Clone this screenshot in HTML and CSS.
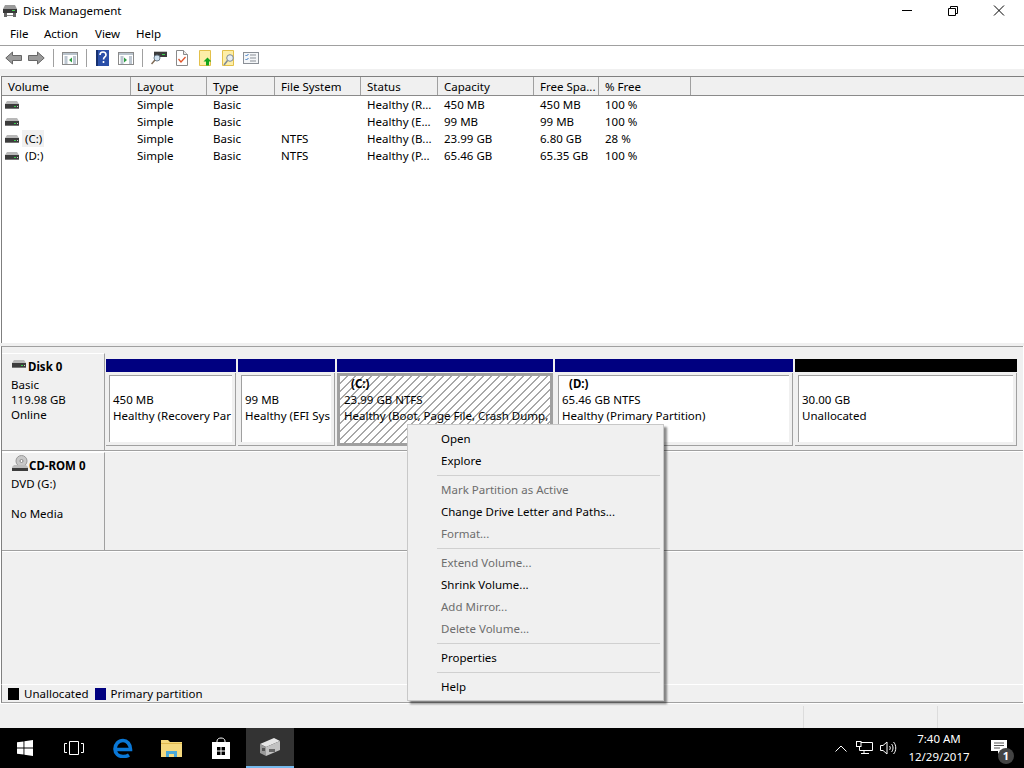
FILE: index.html
```html
<!DOCTYPE html>
<html>
<head>
  <meta charset="utf-8">
  <title>Disk Management</title>
  <link rel="stylesheet" href="styles.css">
</head>
<body>
  <svg class="defs" width="0" height="0">
    <symbol id="drive" viewBox="0 0 14 8">
      <path d="M2 0h10l2 3H0z" fill="#b8b8b8"/>
      <rect x="0" y="3" width="14" height="5" fill="#3c3c3c"/>
      <rect x="0" y="7" width="14" height="1" fill="#777"/>
      <rect x="9" y="5" width="2" height="1" fill="#35d04a"/>
      <rect x="12" y="5" width="1" height="1" fill="#cfcfcf"/>
    </symbol>
    <symbol id="panel" viewBox="0 0 16 13">
      <rect x=".5" y=".5" width="15" height="12" fill="#fff" stroke="#8a8a8a"/>
      <rect x="1" y="1" width="14" height="2" fill="#b9c3cc"/>
      <path d="M2.5 5h3M2.5 7h3M2.5 9h3M2.5 11h3M11 5h3M11 7h3M11 9h3M11 11h3" stroke="#7a8ea3"/>
    </symbol>
  </svg>

  <div class="window">
    <!-- Title bar -->
    <div class="titlebar">
      <svg class="app-icon" viewBox="0 0 16 16">
        <path d="M3 2h10l2 4H1z" fill="#9a9a9a"/>
        <rect x="1" y="6" width="14" height="4" fill="#3a3a3a"/>
        <rect x="10" y="7" width="3" height="1" fill="#3fd24f"/>
        <rect x="2" y="10" width="3" height="4" fill="#666"/>
        <rect x="11" y="10" width="3" height="4" fill="#666"/>
        <rect x="5" y="12" width="6" height="1" fill="#888"/>
      </svg>
      <span class="title-text">Disk Management</span>
      <div class="win-buttons">
        <svg class="win-btn" viewBox="0 0 46 22"><path d="M18 10.5h10" stroke="#000" fill="none"/></svg>
        <svg class="win-btn" viewBox="0 0 46 22"><path d="M18.500 8.500h7v7h-7zM20.500 8.500v-2h7v7h-2" stroke="#000" fill="none"/></svg>
        <svg class="win-btn" viewBox="0 0 46 22"><path d="M18 5.500l10 10M28 5.500l-10 10" stroke="#000" fill="none"/></svg>
      </div>
    </div>

    <!-- Menu bar -->
    <div class="menubar">
      <span class="menu-file">File</span>
      <span class="menu-action">Action</span>
      <span class="menu-view">View</span>
      <span class="menu-help">Help</span>
    </div>

    <!-- Toolbar -->
    <div class="toolbar">
      <svg class="tool tool-arrow" viewBox="0 0 17 14"><path d="M.8 7L7.500 1v3.500h9v5h-9V13z" fill="#9b9b9b" stroke="#666"/></svg>
      <svg class="tool tool-arrow" viewBox="0 0 17 14"><path d="M16.200 7L9.500 1v3.500h-9v5h9V13z" fill="#9b9b9b" stroke="#666"/></svg>
      <i class="tool-sep"></i>
      <svg class="tool tool-panel" viewBox="0 0 16 13"><use href="#panel"/><path d="M10 5.500v5L7 8z" fill="#2f9e44"/></svg>
      <i class="tool-sep"></i>
      <svg class="tool tool-book" viewBox="0 0 13 16">
        <rect width="13" height="16" fill="#2a4fa8"/>
        <path d="M0 0h2v16H0z" fill="#16306f"/>
        <path d="M4 5c0-4 6-4 6 0 0 2-2.500 2-2.500 4.500M7.500 11v2" stroke="#fff" stroke-width="1.600" fill="none"/>
      </svg>
      <svg class="tool tool-panel" viewBox="0 0 16 13"><use href="#panel"/><path d="M6 5.500v5L9 8z" fill="#2f9e44"/></svg>
      <i class="tool-sep"></i>
      <svg class="tool tool-scan" viewBox="0 0 16 15">
        <rect x="3" y="2" width="13" height="5" fill="#3c3c3c"/>
        <rect x="3" y="1" width="13" height="1" fill="#c4c4c4"/>
        <rect x="11" y="4" width="3" height="1" fill="#3fd24f"/>
        <circle cx="6" cy="8" r="3" fill="#cfe2f1" stroke="#6b7c8c"/>
        <path d="M4 10l-3.500 4" stroke="#7d6a55" stroke-width="1.500"/>
      </svg>
      <svg class="tool tool-doc" viewBox="0 0 12 16">
        <path d="M.5.500h7l4 4v11H.5z" fill="#fff" stroke="#8a8a8a"/>
        <path d="M7.500.500v4h4" fill="#e8e8e8" stroke="#8a8a8a"/>
        <path d="M2.500 9l2.500 3 4.500-5" stroke="#e2552a" stroke-width="1.300" fill="none"/>
      </svg>
      <svg class="tool tool-doc" viewBox="0 0 12 16">
        <path d="M.5.500h11v15H.5z" fill="#fdeea8" stroke="#e3c04a"/>
        <path d="M8.500 7.500l4 4h-2.500v4H7v-4H4.500z" fill="#12a51c"/>
      </svg>
      <svg class="tool tool-find" viewBox="0 0 13 16">
        <path d="M.5.500h11v15H.5z" fill="#fdeea8" stroke="#e3c04a"/>
        <circle cx="8" cy="8" r="3.300" fill="#e8eef4" stroke="#7d8a96"/>
        <path d="M5.500 10.500L2 15" stroke="#7d8a96" stroke-width="1.500"/>
      </svg>
      <svg class="tool tool-check" viewBox="0 0 16 12">
        <rect x=".5" y=".5" width="15" height="11" fill="#f4f6f8" stroke="#8a8f96"/>
        <path d="M2.500 3l1 1 2-2M2.500 7l1 1 2-2" stroke="#3a78c2" fill="none"/>
        <path d="M7 3h6M7 6h6M7 9h6" stroke="#8a8f96"/>
      </svg>
    </div>

    <div class="toolbar-gap"></div>

    <!-- Volume list -->
    <div class="volume-list">
      <div class="list-row list-head">
        <span>Volume</span><span>Layout</span><span>Type</span><span>File System</span>
        <span>Status</span><span>Capacity</span><span>Free Spa...</span><span>% Free</span><span></span>
      </div>
      <div class="list-row">
        <span class="vol-name"><svg class="drive-small"><use href="#drive"/></svg></span>
        <span>Simple</span><span>Basic</span><span></span><span>Healthy (R...</span><span>450 MB</span><span>450 MB</span><span>100 %</span><span></span>
      </div>
      <div class="list-row">
        <span class="vol-name"><svg class="drive-small"><use href="#drive"/></svg></span>
        <span>Simple</span><span>Basic</span><span></span><span>Healthy (E...</span><span>99 MB</span><span>99 MB</span><span>100 %</span><span></span>
      </div>
      <div class="list-row">
        <span class="vol-name"><svg class="drive-small"><use href="#drive"/></svg><em class="vol-label vol-focus">(C:)</em></span>
        <span>Simple</span><span>Basic</span><span>NTFS</span><span>Healthy (B...</span><span>23.99 GB</span><span>6.80 GB</span><span>28 %</span><span></span>
      </div>
      <div class="list-row">
        <span class="vol-name"><svg class="drive-small"><use href="#drive"/></svg><em class="vol-label">(D:)</em></span>
        <span>Simple</span><span>Basic</span><span>NTFS</span><span>Healthy (P...</span><span>65.46 GB</span><span>65.35 GB</span><span>100 %</span><span></span>
      </div>
    </div>

    <div class="splitter"></div>

    <!-- Disk map -->
    <div class="disk-pane">
      <div class="disk-row disk-row-first">
        <div class="disk-label">
          <div class="disk-title"><svg class="drive-big"><use href="#drive"/></svg>Disk 0</div>
          <div>Basic</div>
          <div>119.98 GB</div>
          <div>Online</div>
        </div>
        <div class="partitions">
          <div class="part">
            <div class="part-bar"></div>
            <div class="part-box"><div class="part-inner">
              <div class="part-name"></div><div>450 MB</div><div>Healthy (Recovery Par</div>
            </div></div>
          </div>
          <div class="part">
            <div class="part-bar"></div>
            <div class="part-box"><div class="part-inner">
              <div class="part-name"></div><div>99 MB</div><div>Healthy (EFI Sys</div>
            </div></div>
          </div>
          <div class="part">
            <div class="part-bar"></div>
            <div class="part-box part-selected"><div class="part-inner">
              <div class="part-name">(C:)</div><div>23.99 GB NTFS</div><div>Healthy (Boot, Page File, Crash Dump,</div>
            </div></div>
          </div>
          <div class="part">
            <div class="part-bar"></div>
            <div class="part-box"><div class="part-inner">
              <div class="part-name">(D:)</div><div>65.46 GB NTFS</div><div>Healthy (Primary Partition)</div>
            </div></div>
          </div>
          <div class="part">
            <div class="part-bar part-bar-black"></div>
            <div class="part-box"><div class="part-inner">
              <div class="part-name"></div><div>30.00 GB</div><div>Unallocated</div>
            </div></div>
          </div>
        </div>
      </div>
      <div class="disk-row disk-row-cd">
        <div class="disk-label">
          <div class="disk-title">
            <svg class="drive-cd" viewBox="0 0 16 16">
              <circle cx="9.500" cy="6" r="5.500" fill="#c8c8c8" stroke="#999"/>
              <circle cx="9.500" cy="6" r="1.500" fill="#fff" stroke="#888"/>
              <path d="M2 10h12l2 2v4H0v-4z" fill="#bdbdbd"/>
              <rect y="13" width="16" height="3" fill="#3c3c3c"/>
            </svg>CD-ROM 0
          </div>
          <div>DVD (G:)</div>
          <div class="disk-blank"></div>
          <div>No Media</div>
        </div>
      </div>
    </div>

    <!-- Legend -->
    <div class="legend">
      <i class="swatch swatch-black"></i><span>Unallocated</span>
      <i class="swatch swatch-navy"></i><span>Primary partition</span>
    </div>

    <!-- Status bar -->
    <div class="statusbar">
      <div class="status-cell status-main"></div>
      <div class="status-cell status-mid"></div>
      <div class="status-cell status-end"></div>
    </div>
  </div>

  <!-- Context menu -->
  <div class="context-menu">
    <div class="menu-item">Open</div>
    <div class="menu-item">Explore</div>
    <div class="menu-sep"></div>
    <div class="menu-item disabled">Mark Partition as Active</div>
    <div class="menu-item">Change Drive Letter and Paths...</div>
    <div class="menu-item disabled">Format...</div>
    <div class="menu-sep"></div>
    <div class="menu-item disabled">Extend Volume...</div>
    <div class="menu-item">Shrink Volume...</div>
    <div class="menu-item disabled">Add Mirror...</div>
    <div class="menu-item disabled">Delete Volume...</div>
    <div class="menu-sep"></div>
    <div class="menu-item">Properties</div>
    <div class="menu-sep"></div>
    <div class="menu-item">Help</div>
  </div>

  <!-- Taskbar -->
  <div class="taskbar">
    <div class="task-btn">
      <svg class="task-icon" viewBox="0 0 16 16"><path d="M0 2.300L6.500 1.400v6.100H0zM7.400 1.300L16 0v7.500H7.400zM0 8.400h6.500v6.200L0 13.700zM7.400 8.400H16V16l-8.600-1.300z" fill="#fff"/></svg>
    </div>
    <div class="task-btn">
      <svg class="task-icon task-view" viewBox="0 0 20 14"><path d="M5.500.5h9v13h-9zM3 2.500H.5v9H3M17 2.500h2.500v9H17" stroke="#fff" fill="none"/></svg>
    </div>
    <div class="task-btn">
      <svg class="task-icon task-edge" viewBox="0 0 20 20"><path d="M3 11.500h14.500C17.500 6 14 2.500 10 2.500 5.500 2.500 2 6.500 2 11c0 4.500 3.500 7.500 8 7.500 2.500 0 4.500-.5 6-1.500" stroke="#0a78d7" stroke-width="3.600" fill="none"/></svg>
    </div>
    <div class="task-btn">
      <svg class="task-icon task-folder" viewBox="0 0 22 18">
        <path d="M0 1h7l2 2h12v15H0z" fill="#f5d97e"/>
        <path d="M0 4h21v1H0z" fill="#e0b94f"/>
        <path d="M5 18v-6h11v6h-3v-3H8v3z" fill="#4aa8d8"/>
      </svg>
    </div>
    <div class="task-btn">
      <svg class="task-icon task-store" viewBox="0 0 20 22">
        <path d="M6 6V4c0-4 8-4 8 0v2" stroke="#fff" fill="none"/>
        <path d="M1 5h18v17H1z" fill="#fff"/>
        <path d="M6 10h3.500v3.500H6zM10.500 10H14v3.500h-3.500zM6 14.500h3.500V18H6zM10.500 14.500H14V18h-3.500z" fill="#000"/>
      </svg>
    </div>
    <div class="task-btn task-active">
      <svg class="task-icon task-disk" viewBox="0 0 22 20">
        <path d="M1 7L15 1l6 3-14 6z" fill="#e6e6e6"/>
        <path d="M1 7l6 3v9l-6-3z" fill="#9a9a9a"/>
        <path d="M7 10l14-6v9L7 19z" fill="#c2c2c2"/>
        <rect x="3" y="11" width="3" height="3" fill="#555"/>
        <rect x="10" y="12" width="6" height="3" fill="#666"/>
      </svg>
    </div>

    <div class="tray">
      <svg class="tray-chevron" viewBox="0 0 12 7"><path d="M.5 6.500L6 1l5.500 5.500" stroke="#fff" fill="none"/></svg>
      <svg class="tray-net" viewBox="0 0 17 14">
        <path d="M3.500 1.500h13v8h-13zM8 9.500v3M5 12.500h8" stroke="#fff" fill="none"/>
        <rect x=".5" y=".5" width="4.500" height="5" fill="#000" stroke="#fff"/>
      </svg>
      <svg class="tray-vol" viewBox="0 0 17 14">
        <path d="M.5 4.500h2.500L7 1v12L3 9.500H.5zM9.500 5c1 1 1 3 0 4M11.500 3c2 2 2 6 0 8M13.500 1c3 3 3 9 0 12" stroke="#fff" fill="none"/>
      </svg>
      <div class="clock">
        <div>7:40 AM</div>
        <div>12/29/2017</div>
      </div>
      <div class="notify">
        <svg class="notify-bubble" viewBox="0 0 16 15">
          <path d="M0 0h16v11h-6l-3 3v-3H0z" fill="#fff"/>
          <path d="M3 3h10M3 5.500h10M3 8h6" stroke="#555"/>
        </svg>
        <span class="notify-badge">1</span>
      </div>
    </div>
  </div>
</body>
</html>
```

FILE: styles.css
```css
/* General styling */
html, body {
  margin: 0;
  height: 100%;
  overflow: hidden;
}

body {
  position: relative;
  display: flex;
  flex-direction: column;
  background-color: #fff;
  color: #000;
  font-family: 'Noto Sans', sans-serif;
  font-size: 11.5px;
  line-height: 16px;
}

.defs {
  position: absolute;
}

.window {
  flex: 1;
  display: flex;
  flex-direction: column;
  min-height: 0;
}

/* Title bar */
.titlebar {
  height: 22px;
  display: flex;
  align-items: center;
}

.app-icon {
  width: 16px;
  height: 16px;
  margin-left: 2px;
}

.title-text {
  margin-left: 5px;
}

.win-buttons {
  margin-left: auto;
  display: flex;
  padding-right: 2px;
}

.win-btn {
  width: 46px;
  height: 22px;
}

/* Menu bar */
.menubar {
  height: 23px;
  display: flex;
  align-items: center;
  padding-left: 10px;
}

.menu-file { width: 34px; }
.menu-action { width: 51px; }
.menu-view { width: 41px; }

/* Toolbar */
.toolbar {
  height: 23px;
  border-top: 1px solid #a0a0a0;
  display: flex;
  align-items: center;
  padding-left: 5px;
}

.tool {
  display: block;
  flex: none;
}

.tool-arrow {
  width: 17px;
  height: 14px;
  margin-right: 6px;
}

.tool-sep {
  width: 1px;
  height: 18px;
  background-color: #a0a0a0;
  margin: 0 8px 0 2px;
}

.tool-panel {
  width: 16px;
  height: 13px;
  margin: 1px 6px 0 0;
}

.tool-book {
  width: 13px;
  height: 16px;
  margin: 0 9px 0 1px;
}

.tool-scan {
  width: 16px;
  height: 15px;
  margin-right: 9px;
}

.tool-doc {
  width: 12px;
  height: 16px;
  margin-right: 11px;
}

.tool-find {
  width: 13px;
  height: 16px;
  margin-right: 8px;
}

.tool-check {
  width: 16px;
  height: 12px;
}

.toolbar-gap {
  height: 7px;
  background-color: #f0f0f0;
}

/* Volume list */
.volume-list {
  height: 267px;
  box-sizing: border-box;
  margin-left: 1px;
  border-top: 1px solid #7f7f7f;
  border-left: 1px solid #7f7f7f;
  overflow: hidden;
}

.list-row {
  display: grid;
  grid-template-columns: 129px 76px 68px 86px 77px 96px 65px 92px 1fr;
  height: 17px;
  line-height: 17px;
}

.list-row span {
  padding-left: 6px;
  white-space: nowrap;
  overflow: hidden;
}

.list-head {
  height: 18px;
  line-height: 20px;
  background-color: #f0f0f0;
  border-bottom: 1px solid #8a8a8a;
  margin-bottom: 0;
}

.list-head span {
  border-right: 1px solid #a0a0a0;
}

.list-head span:last-child {
  border-right: none;
}

.list-row .vol-name {
  display: flex;
  align-items: center;
  padding-left: 3px;
}

.drive-small {
  width: 14px;
  height: 8px;
  flex: none;
}

.vol-label {
  font-style: normal;
  padding: 0 2px 0 3px;
  margin-left: 3px;
}

.vol-focus {
  background-color: #f0f0f0;
}

.splitter {
  height: 3px;
  background-color: #f0f0f0;
}

/* Disk map */
.disk-pane {
  height: 338px;
  box-sizing: border-box;
  margin-left: 1px;
  margin-right: 1px;
  background-color: #f0f0f0;
  border-top: 1px solid #a0a0a0;
  border-left: 1px solid #808080;
  padding-top: 6px;
}

.disk-row {
  display: flex;
  box-shadow: 0 1px 0 #fff;
}

.disk-row-first {
  height: 97px;
  border-bottom: 1px solid #a0a0a0;
}

.disk-row-cd {
  height: 98px;
  border-bottom: 1px solid #a0a0a0;
  margin-top: 1px;
}

.disk-label {
  width: 103px;
  box-sizing: border-box;
  flex: none;
  padding-left: 9px;
  border-right: 1px solid #a0a0a0;
  border-top: 1px solid #fff;
  line-height: 15px;
}

.disk-blank {
  height: 15px;
}

.disk-title {
  display: flex;
  align-items: center;
  height: 22px;
  margin-left: -1px;
  margin-top: 1px;
  font-weight: bold;
}

.drive-big {
  width: 14px;
  height: 8px;
  margin: 0 2px 4px 2px;
  flex: none;
}

.drive-cd {
  width: 16px;
  height: 16px;
  margin: -4px 1px 0 2px;
  flex: none;
}

.partitions {
  flex: 1;
  display: grid;
  grid-template-columns: 130px 97px 216px 238px 222px;
  column-gap: 2px;
  padding: 6px 0 0 1px;
  align-content: start;
}

.part-bar {
  height: 13px;
  background-color: #000080;
  margin-bottom: 1px;
}

.part-bar-black {
  background-color: #000;
}

.part-box {
  height: 73px;
  box-sizing: border-box;
  padding: 2px 3px 3px 3px;
  border-right: 1px solid #a0a0a0;
  border-bottom: 1px solid #a0a0a0;
}

.part-inner {
  height: 100%;
  box-sizing: border-box;
  background-color: #fff;
  border-top: 1px solid #a0a0a0;
  border-left: 1px solid #a0a0a0;
  padding-left: 3px;
  white-space: nowrap;
  overflow: hidden;
}

.part-name {
  height: 16px;
  padding-left: 7px;
  font-weight: bold;
}

.part-selected {
  background-color: #a0a0a0;
  padding: 3px;
  border: none;
}

.part-selected .part-inner {
  border: none;
  padding-left: 4px;
  background: repeating-linear-gradient(135deg, #fff 0, #fff 4.6px, #a8a8a8 4.6px, #a8a8a8 5.66px);
}

/* Legend */
.legend {
  height: 19px;
  box-sizing: border-box;
  margin: 0 1px;
  display: flex;
  align-items: center;
  padding-left: 6px;
  background-color: #f0f0f0;
  border-top: 1px solid #fff;
  border-left: 1px solid #808080;
  border-bottom: 1px solid #a0a0a0;
}

.swatch {
  width: 11px;
  height: 12px;
  margin-right: 5px;
}

.swatch-black {
  background-color: #000;
}

.swatch-navy {
  background-color: #000080;
  margin-left: 6px;
}

/* Status bar */
.statusbar {
  flex: 1;
  display: flex;
  background-color: #f0f0f0;
  border-top: 1px solid #fff;
  padding-top: 2px;
}

.status-cell {
  border-right: 1px solid #dcdcdc;
}

.status-main { width: 803px; }
.status-mid { width: 133px; }
.status-end { flex: 1; border-right: none; }

/* Context menu */
.context-menu {
  position: absolute;
  left: 407px;
  top: 424px;
  width: 257px;
  height: 277px;
  box-sizing: border-box;
  padding: 3px 2px 0 2px;
  background-color: #f0f0f0;
  border: 1px solid #c8c8c8;
  box-shadow: 3px 3px 2px rgba(0, 0, 0, 0.45);
}

.menu-item {
  height: 22px;
  line-height: 22px;
  padding-left: 31px;
}

.menu-item.disabled {
  color: #6d6d6d;
}

.menu-sep {
  height: 1px;
  margin: 3px 1px 3px 27px;
  background-color: #d0d0d0;
}

/* Taskbar */
.taskbar {
  height: 40px;
  flex: none;
  display: flex;
  background-color: #000;
  color: #fff;
}

.task-btn {
  width: 49px;
  display: flex;
  align-items: center;
  justify-content: center;
}

.task-icon {
  width: 16px;
  height: 16px;
}

.task-view { width: 20px; height: 14px; }
.task-edge { width: 20px; height: 20px; }
.task-folder { width: 22px; height: 18px; }
.task-store { width: 20px; height: 22px; }
.task-disk { width: 22px; height: 20px; }

.task-active {
  width: 48px;
  margin-left: 1px;
  box-sizing: border-box;
  background-color: #333;
  border-bottom: 2px solid #76b9ed;
}

.tray {
  margin-left: auto;
  display: flex;
  align-items: center;
}

.tray-chevron {
  width: 12px;
  height: 7px;
  margin-right: 9px;
}

.tray-net {
  width: 17px;
  height: 14px;
  margin-right: 7px;
}

.tray-vol {
  width: 17px;
  height: 14px;
  margin-right: 7px;
}

.clock {
  width: 70px;
  text-align: center;
  line-height: 18px;
  font-size: 11.5px;
}

.notify {
  position: relative;
  width: 48px;
  height: 40px;
  margin-left: 2px;
}

.notify-bubble {
  position: absolute;
  left: 15px;
  top: 12px;
  width: 16px;
  height: 15px;
}

.notify-badge {
  position: absolute;
  left: 22px;
  top: 20px;
  width: 16px;
  height: 16px;
  border-radius: 50%;
  background-color: #444;
  border: 0;
  text-align: center;
  font-size: 11px;
  font-weight: bold;
  line-height: 16px;
}
```
